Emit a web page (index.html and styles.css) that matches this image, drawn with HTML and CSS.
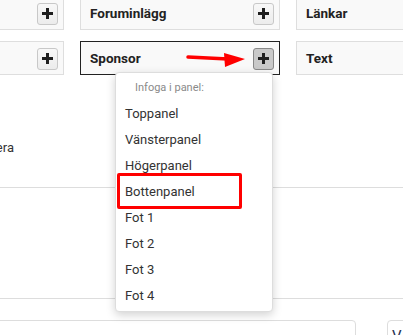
FILE: index.html
```html
<!DOCTYPE html>
<html lang="sv">
<head>
  <meta charset="UTF-8">
  <title>Paneler</title>
  <link rel="stylesheet" href="styles.css">
</head>
<body>

<div class="tiles">
  <div class="tile">
    <span class="tile-name">Inloggning</span>
    <button class="add"><svg width="11" height="11" viewBox="0 0 11 11"><rect x="4" y="0" width="3" height="11"/><rect x="0" y="4" width="11" height="3"/></svg></button>
  </div>
  <div class="tile">
    <span class="tile-name">Foruminlägg</span>
    <button class="add"><svg width="11" height="11" viewBox="0 0 11 11"><rect x="4" y="0" width="3" height="11"/><rect x="0" y="4" width="11" height="3"/></svg></button>
  </div>
  <div class="tile">
    <span class="tile-name">Länkar</span>
  </div>
  <div class="tile">
    <span class="tile-name">Kalender</span>
    <button class="add"><svg width="11" height="11" viewBox="0 0 11 11"><rect x="4" y="0" width="3" height="11"/><rect x="0" y="4" width="11" height="3"/></svg></button>
  </div>
  <div class="tile tile-active">
    <span class="tile-name">Sponsor</span>
    <button class="add add-active"><svg width="11" height="11" viewBox="0 0 11 11"><rect x="4" y="0" width="3" height="11"/><rect x="0" y="4" width="11" height="3"/></svg></button>
  </div>
  <div class="tile">
    <span class="tile-name">Text</span>
  </div>
</div>

<div class="intro">
  <p class="note">Redigera</p>
</div>

<div class="blank"></div>

<div class="footer">
  <div class="field"></div>
  <div class="field field-small">V</div>
</div>

<!-- annotation arrow -->
<svg class="arrow" width="64" height="20" viewBox="0 0 64 20">
  <path d="M2 7 L42 9" stroke="#f00" stroke-width="3.5" stroke-linecap="round" fill="none"/>
  <polygon points="38,3 59,9 39,17" fill="#f00"/>
</svg>

<div class="menu">
  <div class="menu-title">Infoga i panel:</div>
  <div class="menu-item">Toppanel</div>
  <div class="menu-item">Vänsterpanel</div>
  <div class="menu-item">Högerpanel</div>
  <div class="menu-item">Bottenpanel<span class="mark"></span></div>
  <div class="menu-item">Fot 1</div>
  <div class="menu-item">Fot 2</div>
  <div class="menu-item">Fot 3</div>
  <div class="menu-item">Fot 4</div>
</div>

</body>
</html>
```

FILE: styles.css
```css
body {
  margin: 0;
  background: #fff;
  color: #333;
  font-family: Roboto, 'Liberation Sans', sans-serif;
  overflow: hidden;
  width: 403px;
  height: 335px;
  position: relative;
}

.tiles {
  display: grid;
  grid-template-columns: repeat(3, 200px);
  column-gap: 16px;
  row-gap: 11px;
  margin: -4px 0 0 -136px;
}

.tile {
  height: 34px;
  box-sizing: border-box;
  border: 1px solid #dedede;
  background: #f9f9f9;
  display: flex;
  align-items: center;
  justify-content: space-between;
  padding: 0 5px 0 9px;
}

.tile-active {
  border-color: #222;
}

.tile-name {
  font-size: 13.5px;
  font-weight: bold;
  color: #222;
}

.add {
  width: 21px;
  height: 22px;
  padding: 0;
  margin-top: 1px;
  border: 1px solid #c8c8c8;
  border-radius: 3px;
  background: linear-gradient(#f8f8f8, #ececec);
  display: flex;
  align-items: center;
  justify-content: center;
}

.add svg {
  fill: #1e1e1e;
}

.add-active {
  background: #c9c9c9;
  border-color: #888;
}

.intro {
  height: 113px;
  box-sizing: border-box;
  padding-top: 65px;
  border-bottom: 1px solid #ddd;
}

.note {
  margin: 0 0 0 -86px;
  width: 100px;
  text-align: right;
  font-size: 13px;
  line-height: 16px;
  color: #333;
}

.blank {
  height: 110px;
  border-bottom: 1px solid #ddd;
}

.footer {
  display: flex;
  gap: 31px;
  margin: 21px 0 0 -20px;
}

.field {
  flex: none;
  width: 376px;
  height: 40px;
  box-sizing: border-box;
  border: 1px solid #ddd;
  border-radius: 4px;
}

.field-small {
  width: 60px;
  padding: 6px 0 0 4px;
  font-size: 15px;
  color: #253050;
}

.arrow {
  position: absolute;
  left: 186px;
  top: 50px;
}

.menu {
  position: absolute;
  left: 115px;
  top: 72px;
  width: 158px;
  height: 240px;
  box-sizing: border-box;
  padding: 5px 0 3px;
  background: #fff;
  border: 1px solid #ddd;
  border-radius: 4px;
  box-shadow: 0 3px 10px rgba(0, 0, 0, 0.18);
}

.menu-title {
  padding-left: 19px;
  font-size: 11px;
  line-height: 20px;
  color: #8a8a8a;
  margin-bottom: 3px;
}

.menu-item {
  position: relative;
  padding-left: 9px;
  font-size: 13px;
  line-height: 26px;
  color: #333;
}

.mark {
  position: absolute;
  left: 1px;
  top: -6px;
  width: 125px;
  height: 36px;
  box-sizing: border-box;
  border: 3px solid #f00;
  border-radius: 2px;
}
```
